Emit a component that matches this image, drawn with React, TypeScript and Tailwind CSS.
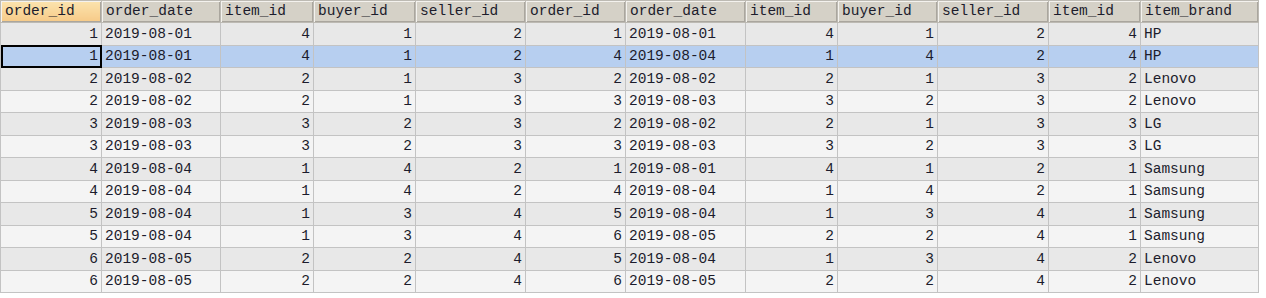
const COLUMNS = [
  { name: "order_id", width: 101, align: "right" },
  { name: "order_date", width: 119, align: "left" },
  { name: "item_id", width: 93, align: "right" },
  { name: "buyer_id", width: 102, align: "right" },
  { name: "seller_id", width: 110, align: "right" },
  { name: "order_id", width: 100, align: "right" },
  { name: "order_date", width: 120, align: "left" },
  { name: "item_id", width: 92, align: "right" },
  { name: "buyer_id", width: 100, align: "right" },
  { name: "seller_id", width: 111, align: "right" },
  { name: "item_id", width: 92, align: "right" },
  { name: "item_brand", width: 118, align: "left" },
];

const ROWS: (string | number)[][] = [
  [1, "2019-08-01", 4, 1, 2, 1, "2019-08-01", 4, 1, 2, 4, "HP"],
  [1, "2019-08-01", 4, 1, 2, 4, "2019-08-04", 1, 4, 2, 4, "HP"],
  [2, "2019-08-02", 2, 1, 3, 2, "2019-08-02", 2, 1, 3, 2, "Lenovo"],
  [2, "2019-08-02", 2, 1, 3, 3, "2019-08-03", 3, 2, 3, 2, "Lenovo"],
  [3, "2019-08-03", 3, 2, 3, 2, "2019-08-02", 2, 1, 3, 3, "LG"],
  [3, "2019-08-03", 3, 2, 3, 3, "2019-08-03", 3, 2, 3, 3, "LG"],
  [4, "2019-08-04", 1, 4, 2, 1, "2019-08-01", 4, 1, 2, 1, "Samsung"],
  [4, "2019-08-04", 1, 4, 2, 4, "2019-08-04", 1, 4, 2, 1, "Samsung"],
  [5, "2019-08-04", 1, 3, 4, 5, "2019-08-04", 1, 3, 4, 1, "Samsung"],
  [5, "2019-08-04", 1, 3, 4, 6, "2019-08-05", 2, 2, 4, 1, "Samsung"],
  [6, "2019-08-05", 2, 2, 4, 5, "2019-08-04", 1, 3, 4, 2, "Lenovo"],
  [6, "2019-08-05", 2, 2, 4, 6, "2019-08-05", 2, 2, 4, 2, "Lenovo"],
];

const SELECTED_ROW = 1;

export default function App() {
  return (
    <div className="w-[1266px] h-[298px] bg-white overflow-hidden font-['Liberation_Mono','Courier_New',monospace] text-[14.5px] text-[#1c1c2c]">
      <table className="table-fixed border-collapse">
        <colgroup>
          {COLUMNS.map((col, i) => (
            <col key={i} style={{ width: col.width }} />
          ))}
        </colgroup>

        <thead>
          <tr className="h-[22px]">
            {COLUMNS.map((col, i) => (
              <th
                key={i}
                className={
                  "p-0 pl-[4px] text-left font-normal leading-none border border-[#bdbab3] shadow-[inset_1px_1px_0_#f4f2ee,inset_-1px_-1px_0_#aaa69e] " +
                  (i === 0
                    ? "bg-gradient-to-b from-[#fbe3ad] to-[#f6c987]"
                    : "bg-[#d5d1c7]")
                }
              >
                {col.name}
              </th>
            ))}
          </tr>
        </thead>

        <tbody>
          {ROWS.map((row, r) => {
            const rowBg =
              r === SELECTED_ROW
                ? "bg-[#b7cff0]"
                : r % 2 === 0
                  ? "bg-[#e8e8e8]"
                  : "bg-[#f4f4f4]";

            return (
              <tr key={r} className={"h-[22.5px] " + rowBg}>
                {row.map((value, c) => {
                  const isFocused = r === SELECTED_ROW && c === 0;

                  return (
                    <td
                      key={c}
                      className={
                        "p-0 px-[3px] leading-none whitespace-nowrap border border-[#c3c3c3] " +
                        (COLUMNS[c].align === "right" ? "text-right " : "text-left ") +
                        (isFocused ? "outline-2 outline-black -outline-offset-2" : "")
                      }
                    >
                      {value}
                    </td>
                  );
                })}
              </tr>
            );
          })}
        </tbody>
      </table>
    </div>
  );
}
